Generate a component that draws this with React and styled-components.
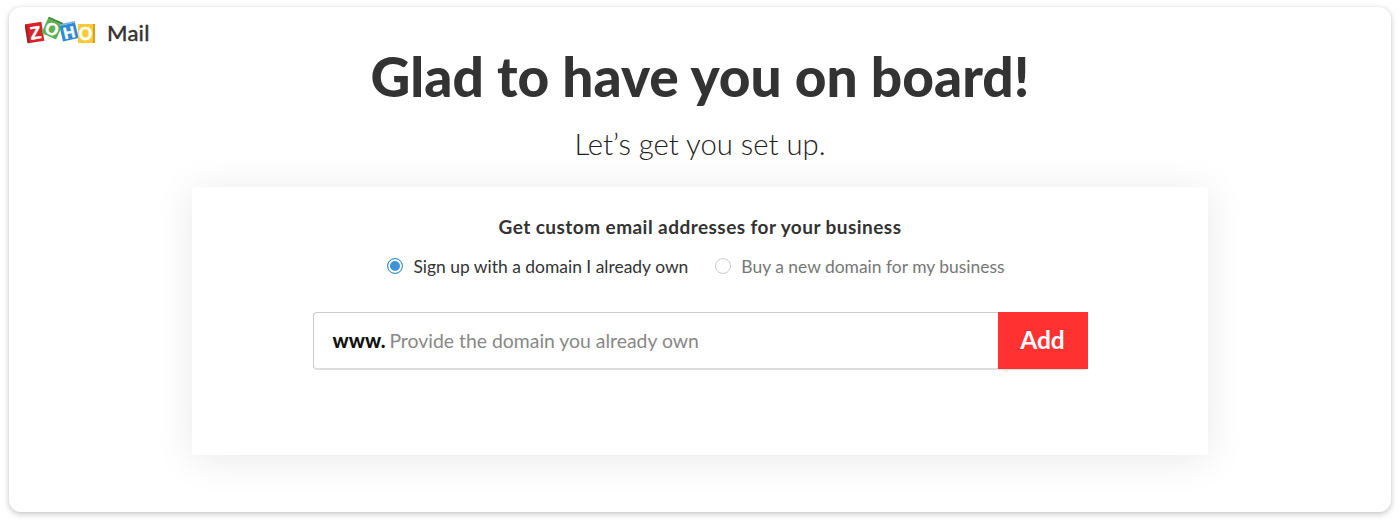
import React from "react";
import styled, { createGlobalStyle } from "styled-components";

const GlobalStyle = createGlobalStyle`
  html, body {
    margin: 0;
    padding: 0;
    background: #fff;
    font-family: "Lato", "Liberation Sans", sans-serif;
  }
`;

function ZohoLogo() {
  return (
    <svg width="70" height="28" viewBox="0 0 70 28">
      <g fontFamily="Liberation Sans" fontWeight="700" textAnchor="middle" fill="#fff">
        <g transform="rotate(-9 10 16)">
          <rect x="2" y="6" width="16" height="19" fill="#d5232c" />
          <rect x="1" y="6" width="2" height="19" fill="#a81a22" />
          <text x="10.5" y="22" fontSize="18" stroke="#fff" strokeWidth="0.4">Z</text>
        </g>
        <g transform="rotate(24 27 12)">
          <rect x="19" y="4" width="16" height="16" fill="#5cb04f" />
          <rect x="19" y="2" width="16" height="2" fill="#3f8a3a" />
          <text x="27" y="18" fontSize="17" stroke="#fff" strokeWidth="0.4">O</text>
        </g>
        <g transform="rotate(-13 44 15)">
          <rect x="36" y="7" width="16" height="16" fill="#2f8ad2" />
          <rect x="36" y="5.5" width="16" height="1.5" fill="#6cb0e4" />
          <text x="44" y="21" fontSize="16" stroke="#fff" strokeWidth="0.4">H</text>
        </g>
        <rect x="53" y="7" width="15" height="19" fill="#f7cb35" />
        <rect x="68" y="7" width="2" height="19" fill="#dd9f1e" />
        <text x="60.5" y="23" fontSize="18" stroke="#fff" strokeWidth="0.4">O</text>
      </g>
    </svg>
  );
}

function RadioOption({ checked, label }) {
  return (
    <Option>
      <RadioCircle $checked={checked} />
      <OptionLabel $checked={checked}>{label}</OptionLabel>
    </Option>
  );
}

export default function App() {
  return (
    <>
      <GlobalStyle />
      <Page>
        <Frame>
          <Brand>
            <ZohoLogo />
            <BrandName>Mail</BrandName>
          </Brand>
          <Title>Glad to have you on board!</Title>
          <Subtitle>Let’s get you set up.</Subtitle>
          <Card>
            <CardTitle>Get custom email addresses for your business</CardTitle>
            <Options>
              <RadioOption checked label="Sign up with a domain I already own" />
              <RadioOption label="Buy a new domain for my business" />
            </Options>
            <DomainForm>
              <Prefix>www.</Prefix>
              <Placeholder>Provide the domain you already own</Placeholder>
              <AddButton>Add</AddButton>
            </DomainForm>
          </Card>
        </Frame>
      </Page>
    </>
  );
}

const Page = styled.div`
  width: 1400px;
  height: 523px;
  padding: 7px 9px 11px;
  box-sizing: border-box;
  overflow: hidden;
`;

const Frame = styled.div`
  height: 505px;
  box-sizing: border-box;
  padding: 9px 0 0;
  background: #fff;
  border-radius: 12px;
  box-shadow: 0 2px 6px rgba(0, 0, 0, 0.22), 0 0 3px rgba(0, 0, 0, 0.05);
  display: flex;
  flex-direction: column;
  align-items: center;
`;

const Brand = styled.div`
  align-self: flex-start;
  display: flex;
  align-items: center;
  gap: 12px;
  height: 30px;
  padding-left: 16px;
`;

const BrandName = styled.span`
  font-size: 22px;
  font-weight: 500;
  letter-spacing: 0.2px;
  color: #333;
  margin-top: 2px;
  -webkit-text-stroke: 0.3px #333;
`;

const Title = styled.h1`
  margin: -1px 0 0;
  font-size: 55px;
  line-height: 62px;
  font-weight: 900;
  color: #333;
`;

const Subtitle = styled.p`
  margin: 20px 0 0;
  font-size: 29.3px;
  line-height: 34px;
  font-weight: 300;
  color: #222;
`;

const Card = styled.section`
  width: 1016px;
  height: 268px;
  margin-top: 26px;
  box-sizing: border-box;
  padding-top: 28px;
  background: #fff;
  border-radius: 4px;
  box-shadow: 0 4px 40px rgba(0, 0, 0, 0.09);
  display: flex;
  flex-direction: column;
  align-items: center;
`;

const CardTitle = styled.h2`
  margin: 0;
  font-size: 19px;
  letter-spacing: 0.45px;
  line-height: 24px;
  font-weight: 700;
  color: #333;
`;

const Options = styled.div`
  display: flex;
  gap: 27px;
  margin: 15px 8px 0 0;
`;

const Option = styled.label`
  display: flex;
  align-items: center;
  gap: 10px;
  height: 24px;
`;

const RadioCircle = styled.span`
  width: 16px;
  height: 16px;
  box-sizing: border-box;
  border-radius: 50%;
  border: 1px solid ${(p) => (p.$checked ? "#3d8fd1" : "#ccc")};
  background: ${(p) => (p.$checked ? "#3f94d8" : "#fff")};
  box-shadow: ${(p) => (p.$checked ? "inset 0 0 0 2px #fff" : "none")};
`;

const OptionLabel = styled.span`
  font-size: 17.45px;
  color: ${(p) => (p.$checked ? "#333" : "#777")};
`;

const DomainForm = styled.div`
  width: 775px;
  height: 58px;
  margin-top: 34px;
  box-sizing: border-box;
  border: 1px solid #ccc;
  border-bottom: 2px solid #ddd;
  border-radius: 4px;
  display: flex;
  align-items: center;
  padding-left: 19px;
`;

const Prefix = styled.span`
  font-size: 20px;
  font-weight: 900;
  color: #111;
  margin-top: -1px;
`;

const Placeholder = styled.span`
  flex: 1;
  margin-left: 4px;
  margin-top: -1px;
  font-size: 19.4px;
  color: #888;
`;

const AddButton = styled.button`
  width: 90px;
  height: 57px;
  margin-top: -1px;
  margin-right: -1px;
  padding-bottom: 2px;
  border: 0;
  background: #ff3131;
  color: #fff;
  font-family: inherit;
  font-size: 24.5px;
  font-weight: 700;
`;
